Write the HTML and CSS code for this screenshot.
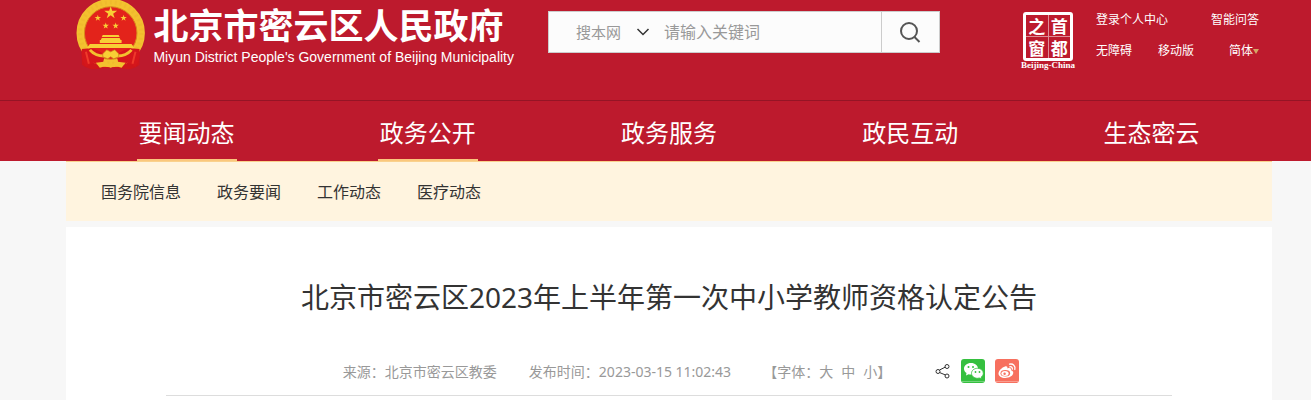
FILE: index.html
```html
<!DOCTYPE html>
<html lang="zh-CN">
<head>
    <meta charset="UTF-8">
    <meta name="viewport" content="width=device-width, initial-scale=1.0">
    <title>北京市密云区2023年上半年第一次中小学教师资格认定公告</title>
    <link rel="stylesheet" href="styles.css">
</head>
<body>
    <header class="header">
        <div class="wrap top">
            <a class="logo" href="#">
                <svg class="emblem" viewBox="0 0 70 70" aria-hidden="true">
                    <path d="M6 50 L6 65 Q14 71 22 69 L35 68 L48 69 Q56 71 64 65 L64 50Z" fill="#cf161b"/>
                    <circle cx="35" cy="33" r="30.500" fill="#e3231b" stroke="#f3c12f" stroke-width="8"/>
                    <circle cx="35" cy="33" r="31" fill="none" stroke="#dd9a20" stroke-width="4" stroke-dasharray="2 3" opacity=".15"/>
                    <circle cx="35" cy="33" r="26.500" fill="none" stroke="#d98a1d" stroke-width="1"/>
                    <g fill="#f8cf35">
                        <path id="star" d="M35 6 L36.500 10.500 L41.500 10.500 L37.500 13.500 L39 18 L35 15.200 L31 18 L32.500 13.500 L28.500 10.500 L33.500 10.500Z"/>
                        <use href="#star" transform="translate(4.500 11.500) scale(.5)"/>
                        <use href="#star" transform="translate(30.500 11.500) scale(.5)"/>
                        <use href="#star" transform="translate(12.500 19.500) scale(.5)"/>
                        <use href="#star" transform="translate(22.500 19.500) scale(.5)"/>
                        <path d="M27 35h16l1 2H26zM26 38h18l1 2H25zM24 40h22v3H24zM14 44h42l3 4H11z"/>
                    </g>
                    <path d="M6 49 Q22 47 29 56 L26 68 L18 63 L10 67 Q4 58 6 49Z" fill="#d5161b"/>
                    <path d="M64 49 Q48 47 41 56 L44 68 L52 63 L60 67 Q66 58 64 49Z" fill="#d5161b"/>
                    <path d="M14 50 Q20 57 31 56 M56 50 Q50 57 39 56" fill="none" stroke="#f3c12f" stroke-width="3"/>
                    <path d="M27 54 L31 50 L35 52 L39 50 L43 54 L43 57 L38 59 L35 57 L32 59 L27 57Z" fill="#f8cf35" stroke="#cf7e1b" stroke-width=".7"/>
                    <path d="M20 63 L28 62 L35 65 L42 62 L50 63 L46 68 L39 66 L35 68 L31 66 L24 68Z" fill="#f3c12f"/>
                    <path d="M10 52 L13 64 M60 52 L57 64" stroke="#ef3a2b" stroke-width="2"/>
                </svg>
                <span class="logo-text">
                    <strong>北京市密云区人民政府</strong>
                    <span>Miyun District People's Government of Beijing Municipality</span>
                </span>
            </a>

            <form class="search">
                <select class="search-range" aria-label="搜索范围">
                    <option>搜本网</option>
                </select>
                <svg class="arrow" viewBox="0 0 14 8" aria-hidden="true"><path d="M1.500 1 L7 6.500 L12.500 1"/></svg>
                <input type="text" placeholder="请输入关键词" aria-label="请输入关键词">
                <button type="button" aria-label="搜索">
                    <svg viewBox="0 0 22 22" aria-hidden="true"><circle cx="9" cy="10" r="8"/><path d="M14.500 16 L19.500 21"/></svg>
                </button>
            </form>

            <div class="tools">
                <a class="capital" href="#">
                    <span class="seal"><i>之</i><i>首</i><i>窗</i><i>都</i></span>
                    <span class="seal-name">Beijing-China</span>
                </a>
                <div class="links">
                    <div><a href="#">登录个人中心</a><a class="last" href="#">智能问答</a></div>
                    <div><a href="#">无障碍</a><a href="#">移动版</a><a class="last lang" href="#">简体</a></div>
                </div>
            </div>
        </div>

        <nav class="nav">
            <div class="wrap">
                <a class="active" href="#">要闻动态</a>
                <a class="active" href="#">政务公开</a>
                <a href="#">政务服务</a>
                <a href="#">政民互动</a>
                <a href="#">生态密云</a>
            </div>
        </nav>
    </header>

    <div class="wrap">
        <nav class="subnav">
            <a href="#">国务院信息</a>
            <a href="#">政务要闻</a>
            <a href="#">工作动态</a>
            <a href="#">医疗动态</a>
        </nav>

        <main class="article">
            <h1>北京市密云区2023年上半年第一次中小学教师资格认定公告</h1>
            <div class="info">
                <span>来源：北京市密云区教委</span>
                <span>发布时间：2023-03-15 11:02:43</span>
                <span class="size">【字体：<button type="button">大</button><button type="button">中</button><button type="button">小</button>】</span>
                <span class="share">
                    <a href="#" aria-label="分享"><svg class="share-icon" viewBox="0 0 16 16"><path d="M4.500 7 L10.500 4 M4.500 9.500 L10.500 12"/><circle cx="3" cy="8.500" r="2"/><circle cx="12" cy="3.500" r="2"/><circle cx="12" cy="13" r="2"/></svg></a>
                    <a href="#" aria-label="微信">
                        <svg viewBox="0 0 24 24"><rect width="24" height="24" rx="3" fill="#35c03f"/>
                            <path d="M10 4C6 4 3 6.500 3 9.700c0 1.800 1 3.300 2.500 4.300L5 16.500l2.600-1.300c.8.200 1.600.3 2.400.3 4 0 7-2.600 7-5.800S14 4 10 4z" fill="#fff"/>
                            <path d="M16.500 9.300c-3.400 0-6 2.200-6 5s2.600 5 6 5c.7 0 1.300-.1 1.900-.3l2.200 1.100-.5-1.900c1.300-.9 2.200-2.300 2.200-3.900 0-2.800-2.500-5-5.800-5z" fill="#fff" stroke="#35c03f" stroke-width=".8"/>
                            <g fill="#35c03f"><circle cx="7.500" cy="8" r="1"/><circle cx="12" cy="8" r="1"/><circle cx="14.500" cy="13" r=".9"/><circle cx="18.500" cy="13" r=".9"/></g>
                            <path d="M0 22.500h24" stroke="#8edb93" stroke-width=".7"/>
                        </svg>
                    </a>
                    <a href="#" aria-label="微博">
                        <svg viewBox="0 0 24 24"><rect width="24" height="24" rx="3" fill="#f7705f"/>
                            <path d="M10 7.500c1.500-.6 2.800 0 2.400 2 2.200-.8 4.200-.4 3.600 1.800 1.800.6 2.500 1.600 2.200 3-.5 2.700-4 4.700-7.900 4.700-4 0-6.800-1.900-6.800-4.500 0-2.800 3.500-6 6.500-7z" fill="#fff"/>
                            <ellipse cx="10.300" cy="14.300" rx="4.800" ry="3.300" fill="#f7705f"/>
                            <ellipse cx="10" cy="14.500" rx="3.600" ry="2.500" fill="#fff"/><circle cx="9.600" cy="14.800" r="1.200" fill="#f7705f"/>
                            <path d="M14.500 5.200c3.500-.9 6.300 1.800 5.300 5.300M14.800 7.800c1.700-.4 2.900.8 2.500 2.400" fill="none" stroke="#fff" stroke-width="1.300" stroke-linecap="round"/>
                            <path d="M0 22.500h24" stroke="#fab1a7" stroke-width=".7"/>
                        </svg>
                    </a>
                </span>
            </div>
        </main>
    </div>
</body>
</html>
```
FILE: styles.css
```css
* {
    margin: 0;
    padding: 0;
    box-sizing: border-box;
}

body {
    background: #f7f7f7;
    font-family: "Noto Sans", "Noto Sans CJK SC", sans-serif;
    color: #333;
}

a {
    color: inherit;
    text-decoration: none;
}

button, input, select {
    font: inherit;
    color: inherit;
    border: none;
    background: none;
}

svg {
    display: block;
}

.wrap {
    margin: 0 39px 0 66px;
}

.header {
    background: #bd1a2d;
    color: #fff;
}

.top {
    height: 100px;
    display: flex;
    align-items: flex-start;
    padding: 0 13px 0 10px;
}

.logo {
    display: flex;
    gap: 8px;
    width: 438px;
}

.emblem {
    width: 70px;
    height: 70px;
}

.logo-text {
    display: flex;
    flex-direction: column;
    white-space: nowrap;
}

.logo-text strong {
    font-family: "Noto Sans CJK SC", sans-serif;
    font-size: 35px;
    line-height: 48px;
}

.logo-text span {
    font-family: "Liberation Sans", Arial, sans-serif;
    font-size: 14px;
    line-height: 18px;
}

.search {
    display: flex;
    align-items: center;
    width: 392px;
    height: 42px;
    margin: 11px 0 0 34px;
    background: #fcfcfc;
    border: 1px solid #ccc;
    color: #999;
}

.search-range {
    appearance: none;
    width: 60px;
    margin-left: 27px;
    font-size: 15px;
}

.arrow {
    width: 14px;
    height: 8px;
    fill: none;
    stroke: #333;
    stroke-width: 1.5;
}

.search input {
    flex: 1;
    min-width: 0;
    margin-left: 14px;
    font-size: 16px;
}

.search input::placeholder {
    color: #999;
}

.search button {
    width: 58px;
    height: 40px;
    border-left: 1px solid #ccc;
}

.search button svg {
    width: 22px;
    height: 22px;
    margin: 0 auto;
    fill: none;
    stroke: #555;
    stroke-width: 2;
}

.tools {
    display: flex;
    gap: 20px;
    margin-left: auto;
}

.capital {
    display: flex;
    flex-direction: column;
    align-items: center;
    width: 56px;
    padding-top: 12px;
}

.seal {
    display: grid;
    grid-template-columns: 1fr 1fr;
    gap: 1px;
    width: 50px;
    height: 49px;
    border: 3px solid #fff;
    border-radius: 3px;
    background: #de8d96;
}

.seal i {
    background: #bd1a2d;
    font-family: "Noto Sans CJK SC", sans-serif;
    font-style: normal;
    font-weight: bold;
    font-size: 17px;
    line-height: 21px;
    text-align: center;
}

.seal-name {
    font-family: "Liberation Serif", serif;
    font-weight: bold;
    font-size: 9px;
    line-height: 9px;
}

.links {
    width: 163px;
    padding-top: 10px;
    font-size: 12px;
    line-height: 20px;
}

.links div {
    display: flex;
    gap: 26px;
    margin-bottom: 11px;
}

.links .last {
    margin-left: auto;
}

.lang::after {
    content: "";
    display: inline-block;
    border: 3px solid transparent;
    border-top: 5px solid #d3a866;
    border-bottom: 0;
    vertical-align: middle;
}

.nav {
    border-top: 1px solid #951425;
}

.nav .wrap {
    display: flex;
    height: 60px;
}

.nav a {
    flex: 1;
    display: flex;
    flex-direction: column;
    align-items: center;
    font-size: 24px;
    line-height: 64px;
}

.nav .active::after {
    content: "";
    width: 100px;
    height: 3px;
    margin-top: -6px;
    background: #fac77d;
}

.subnav {
    display: flex;
    gap: 36px;
    height: 60px;
    padding-left: 35px;
    background: #fff4df;
    border-top: 1px solid #fad18d;
    font-size: 16px;
    line-height: 60px;
}

.article {
    margin-top: 6px;
    padding: 48px 100px 4px;
    background: #fff;
}

h1 {
    font-size: 28px;
    font-weight: normal;
    line-height: 44px;
    text-align: center;
}

.info {
    display: flex;
    justify-content: center;
    align-items: center;
    gap: 32px;
    height: 50px;
    margin-top: 27px;
    padding-left: 24px;
    border-bottom: 1px solid #ddd;
    font-size: 14px;
    color: #999;
    white-space: nowrap;
}

.size button {
    margin-right: 8px;
    cursor: pointer;
}

.size button:last-child {
    margin-right: 0;
}

.share {
    display: flex;
    align-items: center;
    gap: 10px;
    margin-left: 12px;
}

.share svg {
    width: 24px;
    height: 24px;
}

.share .share-icon {
    width: 16px;
    height: 16px;
    fill: none;
    stroke: #333;
    stroke-width: 1;
}
```
